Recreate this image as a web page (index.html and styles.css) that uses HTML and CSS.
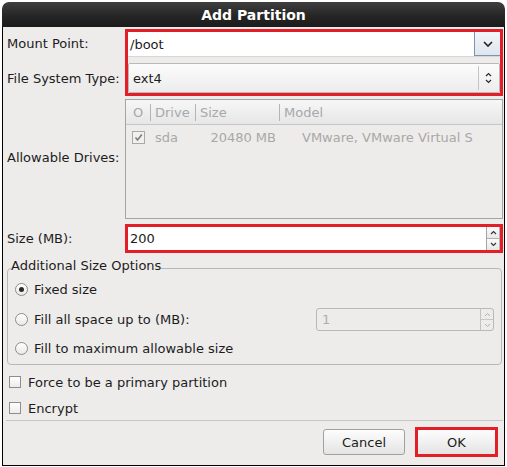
FILE: index.html
```html
<!DOCTYPE html>
<html>
<head>
<meta charset="utf-8">
<link rel="stylesheet" href="styles.css">
</head>
<body>
<div class="window">
  <div class="titlebar">Add Partition</div>
  <div class="content">
    <div class="grid">
      <div class="labels2">
        <div class="lbl l1">Mount Point:</div>
        <div class="lbl l2">File System Type:</div>
      </div>
      <div class="redbox rb1">
        <div class="combo-entry">
          <div class="entry-text">/boot</div>
          <div class="drop-btn">
            <svg width="10" height="6" viewBox="0 0 10 6"><path d="M1 1 L5 5 L9 1" fill="none" stroke="#1e1e1e" stroke-width="1.6"/></svg>
          </div>
        </div>
        <div class="combo-btn">
          <span class="combo-text">ext4</span>
          <span class="vsep"></span>
          <svg class="updown" width="7" height="12" viewBox="0 0 7 12"><path d="M1 4 L3.5 1.5 L6 4 M1 8 L3.5 10.5 L6 8" fill="none" stroke="#2a2a2a" stroke-width="1.2"/></svg>
        </div>
      </div>

      <div class="lbl">Allowable Drives:</div>
      <div class="drives">
        <div class="thead">
          <div class="hc c1">O</div><span class="hsep"></span>
          <div class="hc c2">Drive</div><span class="hsep"></span>
          <div class="hc c3">Size</div><span class="hsep"></span>
          <div class="hc c4">Model</div>
        </div>
        <div class="trow">
          <div class="rc r1">
            <span class="tcheck"><svg width="11" height="11" viewBox="0 0 11 11"><path d="M2.5 5.5 L4.6 8 L8.8 2.5" fill="none" stroke="#7c7c7c" stroke-width="1.6"/></svg></span>
          </div>
          <div class="rc r2">sda</div>
          <div class="rc r3">20480 MB</div>
          <div class="rc r4">VMware, VMware Virtual S</div>
        </div>
      </div>

      <div class="lbl l3">Size (MB):</div>
      <div class="redbox rb2">
        <div class="entry-text e2">200</div>
        <div class="spin">
          <div class="spin-half"><svg width="7" height="5" viewBox="0 0 7 5"><path d="M1 4 L3.5 1.5 L6 4" fill="none" stroke="#333" stroke-width="1.1"/></svg></div>
          <div class="spin-half bottom"><svg width="7" height="5" viewBox="0 0 7 5"><path d="M1 1 L3.5 3.5 L6 1" fill="none" stroke="#333" stroke-width="1.1"/></svg></div>
        </div>
      </div>
    </div>

    <fieldset class="frame">
      <legend class="frame-label">Additional Size Options</legend>
      <div class="opt o1"><span class="radio on"></span><span>Fixed size</span></div>
      <div class="opt o2"><span class="radio"></span><span>Fill all space up to (MB):</span>
        <div class="spin-dis">
          <span class="dis-text">1</span>
          <div class="spin-dis-btn">
            <div class="sdh"><svg width="7" height="5" viewBox="0 0 7 5"><path d="M1 4 L3.5 1.5 L6 4" fill="none" stroke="#b0b0b0" stroke-width="1"/></svg></div>
            <div class="sdh bottom"><svg width="7" height="5" viewBox="0 0 7 5"><path d="M1 1 L3.5 3.5 L6 1" fill="none" stroke="#b0b0b0" stroke-width="1"/></svg></div>
          </div>
        </div>
      </div>
      <div class="opt o3"><span class="radio"></span><span>Fill to maximum allowable size</span></div>
    </fieldset>

    <div class="chk c-a"><span class="box"></span><span>Force to be a primary partition</span></div>
    <div class="chk c-b"><span class="box"></span><span>Encrypt</span></div>

    <div class="hline"></div>

    <div class="btns">
      <div class="btn cancel">Cancel</div>
      <div class="btn ok">OK</div>
    </div>
  </div>
</div>
</body>
</html>
```

FILE: styles.css
```css
* { box-sizing: border-box; }
html, body { margin: 0; padding: 0; background: #ffffff; }
body {
  font-family: "DejaVu Sans", "Noto Sans", sans-serif;
  font-size: 13px;
  color: #1c1c1c;
}
.window { margin: 2px 0 0 2px; width: 503px; }
.titlebar {
  height: 25px;
  background: linear-gradient(#3f3f3f, #262626 55%, #1b1b1b);
  border-radius: 7px 7px 0 0;
  color: #ffffff;
  font-weight: bold;
  font-size: 14px;
  display: flex;
  align-items: center;
  justify-content: center;
}
.content {
  background: #edeceb;
  border: 1px solid #000000;
  border-top: none;
  padding: 2px 0 8px 0;
}
.grid {
  display: grid;
  grid-template-columns: 122px 378px;
}
.lbl {
  padding-left: 4px;
  display: flex;
  align-items: center;
  white-space: nowrap;
}
.labels2 { display: flex; flex-direction: column; padding-top: 2px; }
.l1 { height: 25px; }
.l2 { height: 30px; margin-top: 7px; }
.redbox { border: 3px solid #e41e26; }
.rb1 { height: 67px; display: flex; flex-direction: column; }
.combo-entry {
  height: 25px;
  display: flex;
  background: #ffffff;
  border-bottom: 1px solid #d6d6d6;
}
.entry-text {
  flex: 1;
  padding-left: 2px;
  display: flex;
  align-items: center;
  background: #ffffff;
}
.drop-btn {
  width: 26px;
  background: linear-gradient(#f2f5f9, #dfe6ee);
  border-left: 1px solid #7f93ad;
  border-bottom: 1px solid #7f93ad;
  display: flex;
  align-items: center;
  justify-content: center;
}
.combo-btn {
  margin-top: 6px;
  height: 30px;
  margin-bottom: 0;
  border: 1px solid #b9b9b9;
  border-radius: 2px;
  background: linear-gradient(#fcfcfc, #ececec);
  display: flex;
  align-items: center;
}
.combo-text { flex: 1; padding-left: 4px; }
.vsep { width: 1px; height: 24px; background: #c4c4c4; margin-right: 6px; }
.updown { margin-right: 7px; }

.drives {
  margin-top: 3px;
  height: 120px;
  border: 1px solid #a4a4a4;
  background: #edeceb;
  color: #a8a8a8;
}
.thead {
  height: 25px;
  display: flex;
  align-items: center;
  background: linear-gradient(#f7f7f7, #e6e6e6);
  border-bottom: 1px solid #c6c6c6;
}
.hc { white-space: nowrap; }
.c1 { width: 24px; padding-left: 7px; }
.c2 { width: 44px; padding-left: 4px; }
.c3 { width: 83px; padding-left: 4px; }
.c4 { padding-left: 4px; }
.hsep { width: 1px; height: 17px; background: #b4b4b4; }
.trow { height: 24px; display: flex; align-items: center; }
.rc { white-space: nowrap; }
.r1 { width: 24px; padding-left: 6px; display: flex; }
.r2 { width: 45px; padding-left: 5px; }
.r3 { width: 84px; text-align: right; padding-right: 3px; }
.r4 { padding-left: 23px; }
.tcheck {
  width: 13px; height: 13px;
  border: 1px solid #a9a9a9;
  background: #f0f0f0;
  display: flex; align-items: center; justify-content: center;
}

.l3 { margin-top: 5px; }
.rb2 { margin-top: 5px; height: 29px; display: flex; background: #fff; }
.e2 { padding-left: 2px; }
.spin {
  width: 14px;
  border-left: 1px solid #a5a5a5;
  border-right: 1px solid #b5b5b5;
  display: flex;
  flex-direction: column;
}
.spin-half {
  flex: 1;
  background: linear-gradient(#fafafa, #e8e8e8);
  display: flex; align-items: center; justify-content: center;
}
.spin-half.bottom { border-top: 1px solid #b0b0b0; }

.frame {
  margin: 5px 2px 0 4px;
  border: 1px solid #b8b8b8;
  border-radius: 4px;
  padding: 0 7px 4px 7px;
  min-width: 0;
}
.frame-label {
  margin-left: -4px;
  padding: 0 0 4px 0;
  line-height: 16px;
}
.opt { display: flex; align-items: center; height: 23px; }
.o2 { margin-top: 7px; }
.o3 { margin-top: 6px; }
.radio {
  width: 13px; height: 13px;
  border: 1px solid #8d8d8d;
  border-radius: 50%;
  background: linear-gradient(#ffffff, #e9e9e9);
  margin-right: 6px;
  display: flex; align-items: center; justify-content: center;
  flex: none;
}
.radio.on::after {
  content: "";
  width: 5px; height: 5px;
  border-radius: 50%;
  background: #2b2b2b;
}
.spin-dis {
  margin-left: auto;
  width: 178px;
  height: 23px;
  border: 1px solid #b9b9b9;
  border-radius: 3px;
  display: flex;
  align-items: stretch;
}
.dis-text { flex: 1; padding-left: 5px; color: #acacac; display: flex; align-items: center; }
.spin-dis-btn {
  width: 13px;
  border-left: 1px solid #c2c2c2;
  display: flex; flex-direction: column;
}
.sdh { flex: 1; display: flex; align-items: center; justify-content: center; }
.sdh.bottom { border-top: 1px solid #c8c8c8; }

.chk { display: flex; align-items: center; height: 24px; padding-left: 6px; }
.c-a { margin-top: 5px; }
.c-b { margin-top: 2px; }
.box {
  width: 12px; height: 12px;
  border: 1px solid #8d8d8d;
  background: linear-gradient(#ffffff, #ececec);
  margin-right: 7px;
  flex: none;
}
.hline { height: 1px; background: #c6c6c6; margin: 0 1px 0 3px; }
.btns {
  display: flex;
  justify-content: flex-end;
  align-items: center;
  gap: 10px;
  padding: 6px 6px 0 0;
  height: 36px;
}
.btn {
  display: flex; align-items: center; justify-content: center;
  background: linear-gradient(#fdfdfd, #e4e4e4);
}
.cancel {
  width: 82px; height: 26px;
  border: 1px solid #a0a0a0;
  border-radius: 3px;
}
.ok {
  width: 83px; height: 30px;
  border: 3px solid #e41e26;
}
```
